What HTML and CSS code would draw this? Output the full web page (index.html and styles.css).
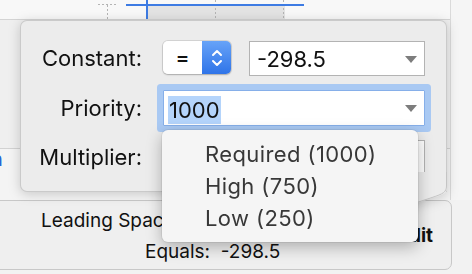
FILE: index.html
```html
<!DOCTYPE html>
<html lang="en">
<head>
    <meta charset="UTF-8">
    <meta name="viewport" content="width=device-width, initial-scale=1.0">
    <title>Constraint Editor</title>
    <link rel="stylesheet" href="styles.css">
</head>
<body>
    <div class="inspector">
        <div class="top">
            <div class="main">
                <div class="ruler">
                    <svg width="450" height="19" viewBox="0 0 450 19">
                        <rect x="147" y="5" width="138" height="14" fill="#e3e3e3"/>
                        <g stroke="#b4b4b4" stroke-width="1" stroke-dasharray="2 2" fill="none">
                            <line x1="98" y1="4.5" x2="116" y2="4.5"/>
                            <line x1="107.5" y1="5" x2="107.5" y2="19"/>
                            <line x1="215.5" y1="0" x2="215.5" y2="19"/>
                            <line x1="283.5" y1="0" x2="283.5" y2="19"/>
                        </g>
                        <rect x="126" y="4" width="178" height="2" fill="#3d7be3"/>
                        <rect x="146" y="0" width="2" height="19" fill="#3d7be3"/>
                    </svg>
                </div>
                <div class="upper"></div>
                <div class="lower"><span class="link">n</span></div>
            </div>
            <div class="side"></div>
        </div>
        <div class="constraint">
            <div class="constraint-text">
                <div>Leading Space to: Superview</div>
                <div class="eq">Equals:&nbsp; -298.5</div>
            </div>
            <div class="edit">Edit</div>
        </div>
    </div>

    <!-- popover over the inspector -->
    <div class="popover">
        <div class="label">Constant:</div>
        <div class="controls">
            <div class="stepper">
                <div class="stepper-value">=</div>
                <div class="stepper-btn">
                    <svg width="12" height="22" viewBox="0 0 12 22">
                        <polyline points="2,8 6,4 10,8" fill="none" stroke="#fff" stroke-width="2" stroke-linecap="round" stroke-linejoin="round"/>
                        <polyline points="2,14 6,18 10,14" fill="none" stroke="#fff" stroke-width="2" stroke-linecap="round" stroke-linejoin="round"/>
                    </svg>
                </div>
            </div>
            <div class="combo">
                <span>-298.5</span>
                <span class="caret"></span>
            </div>
        </div>

        <div class="label">Priority:</div>
        <div class="combo field-focus">
            <span class="sel">1000</span>
            <span class="caret"></span>
        </div>

        <div class="label">Multiplier:</div>
        <div class="combo">
            <span>1</span>
        </div>

        <svg class="arrow" width="90" height="36" viewBox="0 0 90 36">
            <path d="M0 0 L90 0 L90 16 C90 21 86 23 75 26 L48 35 L21 26 C10 23 6 20 0 20 Z" fill="#ececec"/>
            <path d="M0 19.5 C6 19.5 10 22 21 25.5 L48 34.5 L75 25.5 C86 22 89.5 20 89.5 14 L89.5 0" fill="none" stroke="#c4c4c4" stroke-width="1"/>
        </svg>
    </div>

    <div class="menu">
        <div class="menu-item">Required (1000)</div>
        <div class="menu-item">High (750)</div>
        <div class="menu-item">Low (250)</div>
    </div>
</body>
</html>
```

FILE: styles.css
```css
body {
    margin: 0;
    width: 472px;
    height: 274px;
    overflow: hidden;
    position: relative;
    background: #f2f2f2;
    font-family: Inter, "Liberation Sans", sans-serif;
    color: #111;
}

.inspector {
    display: flex;
    flex-direction: column;
    height: 274px;
}
.top {
    display: flex;
    height: 200px;
}
.main {
    width: 450px;
    border-right: 1px solid #dadada;
    display: flex;
    flex-direction: column;
}
.ruler {
    height: 19px;
    border-bottom: 1px solid #d4d4d4;
    background: #f8f8f8;
}
.ruler svg {
    display: block;
}
.upper {
    flex: 1;
    background: #efefef;
}
.lower {
    height: 52px;
    box-sizing: border-box;
    border-top: 1px solid #d2d2d2;
    background: #f4f4f4;
}
.link {
    display: block;
    margin-left: -9px;
    font-size: 20px;
    line-height: 20px;
    color: #2a64d6;
}
.side {
    flex: 1;
    background: #f5f5f5;
}

.constraint {
    height: 70px;
    width: 462px;
    margin-left: -10px;
    box-sizing: border-box;
    border: 1px solid #c8c8c8;
    border-radius: 0 7px 7px 0;
    background: #efefef;
    display: flex;
    padding: 4px 18px 0 50px;
    font-size: 19px;
    line-height: 31px;
}
.eq {
    padding-left: 104px;
}
.edit {
    margin-left: auto;
    align-self: center;
    margin-top: -4px;
    font-weight: 700;
}

/* popover */
.popover {
    position: absolute;
    left: 20px;
    top: 20px;
    width: 427px;
    height: 172px;
    box-sizing: border-box;
    padding-top: 20px;
    border: 1px solid rgba(0, 0, 0, 0.14);
    border-radius: 7px 7px 0 7px;
    background: #ececec;
    filter: drop-shadow(0 2px 6px rgba(0, 0, 0, 0.18));
    display: grid;
    grid-template-columns: 121px 262px;
    grid-template-rows: 35px 36px 35px;
    column-gap: 21px;
    row-gap: 14px;
    font-size: 22px;
}
.label {
    text-align: right;
    line-height: 35px;
    align-self: center;
}
.controls {
    display: flex;
    gap: 18px;
    align-items: flex-start;
}
.stepper {
    display: flex;
    width: 68px;
    height: 33px;
    border-radius: 5px;
    overflow: hidden;
    box-shadow: 0 0 0 1px rgba(0, 0, 0, 0.1), 0 1px 2px rgba(0, 0, 0, 0.2);
}
.stepper-value {
    width: 39px;
    background: #fff;
    text-align: center;
    line-height: 33px;
    font-size: 21px;
    font-weight: 500;
}
.stepper-btn {
    flex: 1;
    background: linear-gradient(#67a3f8, #2f74e8);
    display: flex;
    align-items: center;
    justify-content: center;
}
.stepper-btn svg {
    display: block;
}
.combo {
    flex: 1;
    height: 35px;
    box-sizing: border-box;
    border: 1px solid #b3b3b3;
    background: #fff;
    display: flex;
    align-items: center;
    justify-content: space-between;
    padding: 1px 7px 0 7px;
}
.caret {
    width: 0;
    height: 0;
    border-left: 6px solid transparent;
    border-right: 6px solid transparent;
    border-top: 7px solid #7d7d7d;
}
.field-focus {
    height: 36px;
    align-items: flex-start;
    padding: 5px 7px 0 4px;
    border-color: #86afe9;
    border-radius: 1px;
    box-shadow: 0 0 0 6px #a9c9f3;
}
.field-focus .caret {
    align-self: center;
    margin-top: -4px;
}
.sel {
    background: #b4d4fb;
    line-height: 28px;
    padding: 0 1px;
}
.arrow {
    position: absolute;
    top: 151px;
    right: -1px;
}

/* priority menu */
.menu {
    position: absolute;
    left: 162px;
    top: 130px;
    width: 256px;
    height: 112px;
    box-sizing: border-box;
    padding: 8px 0 0 43px;
    background: #f5f5f5;
    border-radius: 6px;
    box-shadow: 0 0 0 1px rgba(0, 0, 0, 0.06), 0 5px 16px rgba(0, 0, 0, 0.28);
    font-size: 22px;
    line-height: 32px;
    letter-spacing: 0.4px;
    color: #383838;
}
```
